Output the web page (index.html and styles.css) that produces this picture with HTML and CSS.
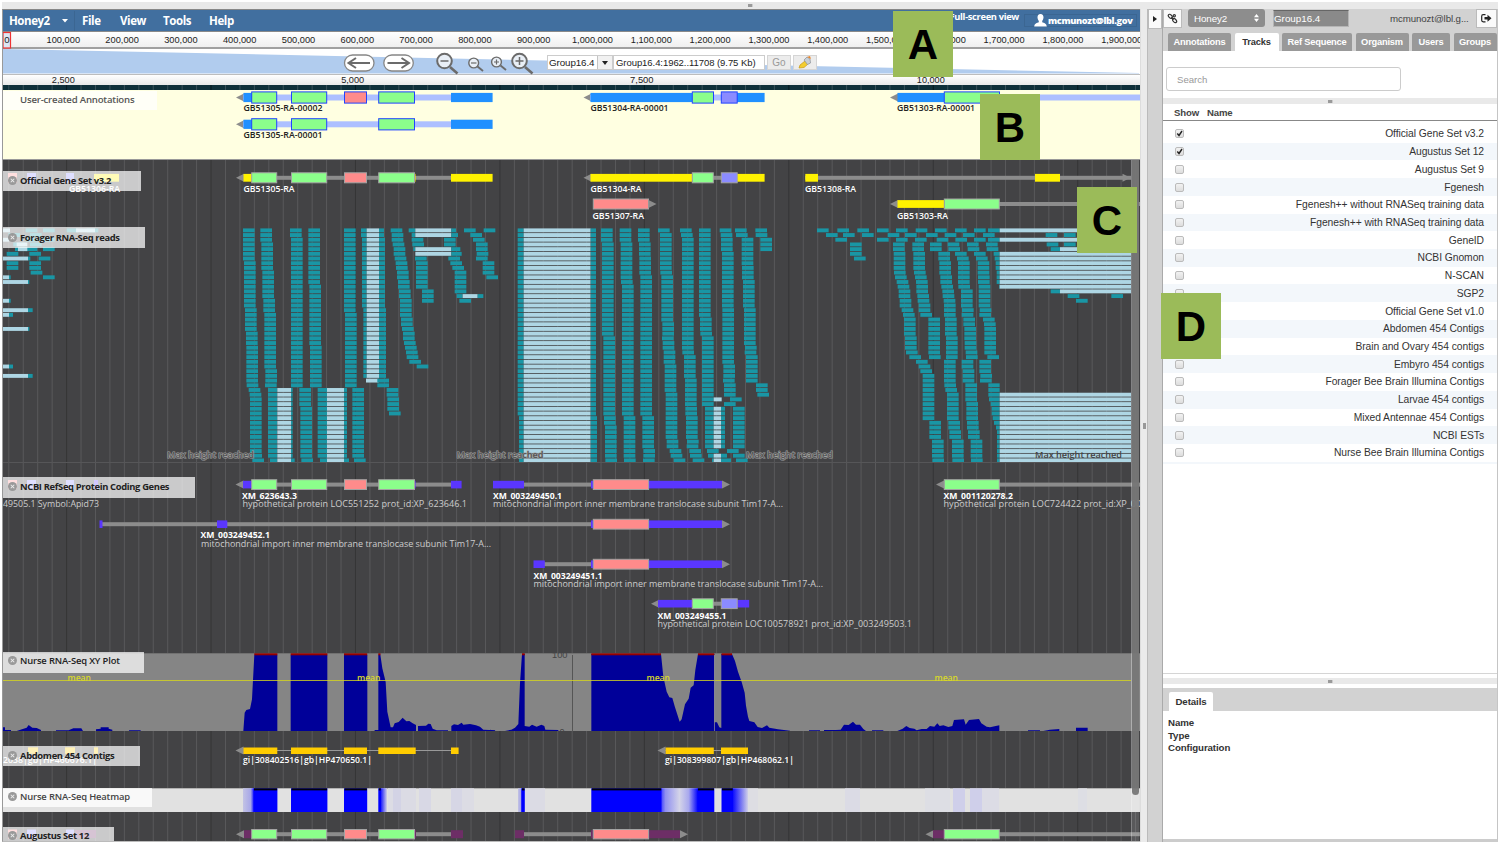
FILE: index.html
```html
<!DOCTYPE html>
<html lang="en">
<head>
<meta charset="utf-8">
<title>Genome annotation browser</title>
<link rel="stylesheet" href="styles.css">
</head>
<body>
<div class="app">
  <div class="top-splitter"><i class="grip"></i></div>
  <div class="columns">
    <main class="browser">
      <header class="menubar">
        <span class="menu-brand">Honey2</span>
        <span class="menu-drop"><svg width="6" height="4"><path d="M0 0h6L3 3.5z" fill="#fff"/></svg></span>
        <span class="menu-item file">File</span>
        <span class="menu-item view">View</span>
        <span class="menu-item tools">Tools</span>
        <span class="menu-item help">Help</span>
        <span class="fullscreen">Full-screen view</span>
        <span class="user"><svg width="13" height="13" viewBox="0 0 13 13"><path d="M6.5 0C4.4 0 3.4 1.6 3.5 3.5 3.6 5 4.200 6.100 4.800 6.900V8.300C3 9 0.500 9.400 0.200 12.500H12.800C12.500 9.400 10 9 8.200 8.300V6.900C8.800 6.100 9.400 5 9.500 3.500 9.600 1.600 8.600 0 6.500 0z" fill="#fff"/></svg><b>mcmunozt@lbl.gov</b></span>
      </header>
      <div class="overview"><svg id="overview" width="1137" height="15" viewBox="3 32 1137 15"></svg></div>
      <nav class="navbar">
        <svg class="nav-bg" width="1137" height="26" viewBox="3 49 1137 26"><path d="M3 49L1139 73V73.500H3z" fill="#b1ccee"/></svg>
        <svg class="nav-icons" width="200" height="26" viewBox="340 49 200 26" fill="none" stroke="#6b6b6b">
          <rect x="344.500" y="55" width="29.500" height="16" rx="8" fill="#fff" stroke="#868686" stroke-width="1.300"/>
          <path d="M370 63H349M356 58L348.500 63L356 68" stroke-width="2"/>
          <rect x="383.800" y="55" width="29.500" height="16" rx="8" fill="#fff" stroke="#868686" stroke-width="1.300"/>
          <path d="M387.500 63H408.500M401.500 58L409 63L401.500 68" stroke-width="2"/>
          <path d="M450 67L457.500 73.500" stroke-width="2.600"/><circle cx="444.500" cy="61" r="7.300" fill="#e9eff6" stroke-width="2"/><path d="M440.500 61H448.500" stroke-width="1.500"/>
          <path d="M477.500 66.500L483 71" stroke-width="1.900"/><circle cx="473.700" cy="63" r="4.900" fill="#e9eff6" stroke-width="1.400"/><path d="M471 63H476.500" stroke-width="1.200"/>
          <path d="M500.500 65.500L506 70" stroke-width="1.900"/><circle cx="496.500" cy="62" r="4.900" fill="#e9eff6" stroke-width="1.400"/><path d="M494 62H499M496.500 59.500V64.500" stroke-width="1.200"/>
          <path d="M525 67L532.500 73.500" stroke-width="2.600"/><circle cx="519.500" cy="61" r="7.300" fill="#e9eff6" stroke-width="2"/><path d="M515.500 61H523.500M519.500 57V65" stroke-width="1.500"/>
        </svg>
        <span class="combo"><span class="combo-text">Group16.4</span><span class="combo-arrow"><svg width="6" height="4"><path d="M0 0h6L3 4z" fill="#222"/></svg></span></span>
        <span class="location">Group16.4:1962..11708 (9.75 Kb)</span>
        <span class="go">Go</span>
        <span class="highlight"><svg width="14" height="13" viewBox="0 0 14 13"><path d="M1 12l1-3 5-4 3 3-4 3.500z" fill="#f3cd2f" stroke="#c79a18" stroke-width=".7"/><path d="M6 4l3-3 3 2 .5 4-3 1.500z" fill="#c9cfd5" stroke="#8a8f96" stroke-width=".7"/><path d="M9 1l3-1 1 3z" fill="#e8862c"/></svg></span>
      </nav>
      <div class="ruler"><svg id="ruler" width="1137" height="10" viewBox="3 75 1137 10"></svg></div>
      <div class="ruler-grid"><svg id="strip" width="1137" height="5" viewBox="3 85 1137 5"></svg></div>
      <section class="track user-track">
        <svg id="t-user" width="1137" height="69" viewBox="3 90 1137 69"></svg>
        <span class="label plain"><span>User-created Annotations</span></span>
      </section>
      <div class="tracks">
        <section class="track"><svg id="t-official" width="1137" height="67" viewBox="3 160 1137 67"></svg>
          <span class="label l-official"><i class="close"></i><span>Official Gene Set v3.2</span></span></section>
        <section class="track"><svg id="t-reads" width="1137" height="236" viewBox="3 227 1137 236"></svg>
          <span class="label l-reads"><i class="close"></i><span>Forager RNA-Seq reads</span></span></section>
        <section class="track"><svg id="t-ncbi" width="1137" height="190" viewBox="3 463 1137 190"></svg>
          <span class="label l-ncbi"><i class="close"></i><span>NCBI RefSeq Protein Coding Genes</span></span></section>
        <section class="track"><svg id="t-xy" width="1137" height="78" viewBox="3 653 1137 78"></svg>
          <span class="label l-xy"><i class="close"></i><span>Nurse RNA-Seq XY Plot</span></span></section>
        <section class="track"><svg id="t-abdomen" width="1137" height="57" viewBox="3 731 1137 57"></svg>
          <span class="label l-abdomen"><i class="close"></i><span>Abdomen 454 Contigs</span></span></section>
        <section class="track"><svg id="t-heat" width="1137" height="24" viewBox="3 788 1137 24"></svg>
          <span class="label l-heat"><i class="close"></i><span>Nurse RNA-Seq Heatmap</span></span></section>
        <section class="track"><svg id="t-augustus" width="1137" height="29" viewBox="3 812 1137 29"></svg>
          <span class="label l-augustus"><i class="close"></i><span>Augustus Set 12</span></span></section>
        <div class="scrollbar"><i class="thumb"></i></div>
      </div>
    </main>
    <div class="side-splitter"><i class="grip-v"></i></div>
    <div class="collapse-bar"><span class="icon-btn collapse"><svg width="4" height="6"><path d="M0 0v6l4-3z" fill="#222"/></svg></span></div>
    <aside class="panel">
      <div class="panel-head">
        <div class="panel-tools">
          <span class="icon-btn link"><svg width="11" height="11" viewBox="0 0 11 11" fill="none" stroke="#333" stroke-width="1.200"><ellipse cx="3.300" cy="3.300" rx="2.400" ry="1.500" transform="rotate(45 3.300 3.300)"/><ellipse cx="7.600" cy="7.600" rx="2.400" ry="1.500" transform="rotate(45 7.600 7.600)"/><path d="M4.300 4.300L6.600 6.600"/><circle cx="7.300" cy="2.800" r="1.100"/></svg></span>
          <span class="organism-select"><span>Honey2</span><svg width="5" height="8"><path d="M0 3.200L2.500 0L5 3.200zM0 4.800L2.500 8L5 4.800z" fill="#fff"/></svg></span>
          <span class="seq-input">Group16.4</span>
          <span class="email">mcmunozt@lbl.g...</span>
          <span class="icon-btn logout"><svg width="11" height="9" viewBox="0 0 11 9"><path d="M4.500 .7H2.200Q.7 .7 .7 2.200V6.300Q.7 7.800 2.200 7.800H4.500" fill="none" stroke="#222" stroke-width="1.200"/><path d="M3.500 3H6.500V.8L10.500 4.300L6.500 7.800V5.600H3.500z" fill="#222"/></svg></span>
        </div>
        <div class="tabs">
          <span class="tab w-annotations">Annotations</span><span class="tab active w-tracks">Tracks</span><span class="tab w-sequence">Ref Sequence</span><span class="tab w-organism">Organism</span><span class="tab w-users">Users</span><span class="tab w-groups">Groups</span>
        </div>
      </div>
      <div class="search-pane"><span class="search">Search</span></div>
      <div class="h-splitter"><i class="grip"></i></div>
      <div class="table">
        <div class="thead"><b class="c-show">Show</b><b>Name</b></div>
        <div class="tbody" id="rows"></div>
      </div>
      <div class="h-splitter low"><i class="grip"></i></div>
      <div class="details">
        <div class="details-head"><span class="tab active">Details</span></div>
        <div class="details-body"><b>Name</b><b>Type</b><b>Configuration</b></div>
      </div>
    </aside>
  </div>
  <span class="callout a">A</span>
  <span class="callout b">B</span>
  <span class="callout c">C</span>
  <span class="callout d">D</span>
</div>
<script src="script.js"></script>
</body>
</html>
```
FILE: styles.css
```css
* { box-sizing: border-box; }
body { margin: 0; background: #fff; font-family: "Liberation Sans", Arial, sans-serif; color: #333; }
svg { display: block; }
.app { position: relative; width: 1500px; height: 844px; padding: 2px 2px 0 2px; overflow: hidden; }
.top-splitter { height: 7px; background: #e9e9e9; display: flex; align-items: center; justify-content: center; }
.grip { width: 5px; height: 3px; background: #9a9a9a; border-right: 1px solid #ccc; }
.columns { display: flex; height: 833px; }

.browser { width: 1138px; border-left: 1px solid #999; border-top: 1px solid #888; overflow: hidden; background: #fff; border-bottom: 1px solid #bbb; }
.menubar { height: 22px; background: #416f9f; border-bottom: 1px solid #8a8a8a; display: flex; align-items: center; color: #fff; font: 700 11.500px "Open Sans", "Noto Sans", sans-serif; white-space: nowrap; }
.menu-brand { width: 53px; padding-left: 6px; font-size: 11.500px; letter-spacing: -.45px; padding-bottom: 1px; }
.menu-drop { width: 19px; height: 20px; display: flex; align-items: center; justify-content: center; border-right: 1px solid #3b6692; }
.menu-item { letter-spacing: -.4px; }
.file { margin-left: 7px; width: 38px; }
.view { width: 43px; }
.tools { width: 46px; }
.fullscreen { margin-left: auto; font-size: 9.300px; letter-spacing: -.32px; padding-bottom: 8px; }
.user { display: flex; align-items: center; gap: 1px; margin-left: 5px; margin-right: 3px; padding: 0 8px 0 9px; width: 113px; height: 13px; border: 1px solid #3b6692; font-size: 9.200px; letter-spacing: -.36px; }
.user svg { flex: none; }

.overview { height: 17px; border-bottom: 2px solid #a0a0a0; background: linear-gradient(#fff, #efefef); }
.navbar { position: relative; height: 26px; border-bottom: 1px solid #bdbdbd; display: flex; align-items: center; padding-left: 337px; padding-top: 2px; font-size: 10px; white-space: nowrap; color: #222; }
.nav-bg { position: absolute; left: 0; top: 0; }
.nav-icons { position: relative; flex: none; margin-top: -2px; }
.combo { position: relative; margin-left: 7px; width: 66px; height: 15px; border: 1px solid #ccc; background: #fff; display: flex; align-items: center; }
.combo-text { width: 49px; padding-left: 1px; font-size: 9.800px; letter-spacing: -.1px; }
.combo-arrow { flex: 1; height: 13px; background: #f1f1f1; border-left: 1px solid #c4c4c4; display: flex; align-items: center; justify-content: center; }
.location { position: relative; width: 152px; height: 15px; line-height: 13px; padding-left: 2px; background: #fff; border: 1px solid #ccc; font-size: 9.500px; letter-spacing: -.06px; }
.go, .highlight { position: relative; height: 15px; background: #ececec; border: 1px solid #d5d5d5; display: flex; align-items: center; justify-content: center; color: #999; }
.go { width: 24px; margin-left: 2px; }
.highlight { width: 24px; margin-left: 2px; }
.ruler { height: 10px; background: linear-gradient(#fff, #e9e9e9); }
.ruler-grid { height: 5px; background: #0f303a; }

.track { position: relative; }
.user-track { background: #ffffe1; border-bottom: 1px solid #999; }
.tracks { position: relative; background: #434345; }
.label { position: absolute; left: 0; top: 0; height: 20px; display: flex; align-items: center; padding-left: 5px; padding-bottom: 1px; background: rgba(255,255,255,.72); font: 700 9.400px "Open Sans", "Noto Sans", sans-serif; color: #222; white-space: nowrap; }
.label span { letter-spacing: -.34px; }
.label.plain { padding-left: 17px; padding-bottom: 3px; width: 154px; height: 19px; top: 1px; color: #555; font-weight: 600; font-size: 9.600px; }
.label.plain span { letter-spacing: -.2px; }
.close { width: 9px; height: 9px; margin-right: 3px; border-radius: 50%; background: #999; position: relative; flex: none; }
.close::before, .close::after { content: ""; position: absolute; left: 2px; top: 4px; width: 5px; height: 1px; background: #eee; transform: rotate(45deg); }
.close::after { transform: rotate(-45deg); }
.l-official { width: 138px; top: 11px; }
.l-reads { width: 142px; top: 0; height: 21px; }
.l-ncbi { width: 192px; top: 14px; height: 21px; padding-bottom: 3px; }
.l-xy { width: 141px; top: -1px; height: 21px; padding-bottom: 4px; font-weight: 600; }
.l-xy span, .l-heat span { letter-spacing: -.14px; }
.l-abdomen { width: 137px; top: 15px; height: 20px; padding-bottom: 2px; }
.l-heat { width: 149px; top: 0; height: 19px; color: #444; font-weight: 600; padding-bottom: 2px; background: rgba(255,255,255,.78); }
.l-augustus { width: 111px; top: 15px; height: 14px; padding-top: 4px; }
.scrollbar { position: absolute; right: 1px; top: 0; width: 8px; height: 100%; background: rgba(255,255,255,.12); border-left: 1px solid rgba(255,255,255,.25); }
.thumb { display: block; height: 635px; border-radius: 0 0 4px 4px; background: rgba(118,118,118,.94); }

.side-splitter { width: 7px; background: #ebebeb; display: flex; align-items: center; justify-content: center; border-left: 1px solid #ddd; }
.grip-v { width: 3px; height: 6px; background: #999; }
.collapse-bar { width: 16px; background: #d2d2d2; border-left: 1px solid #bbb; border-right: 1px solid #aaa; }
.icon-btn { display: flex; align-items: center; justify-content: center; height: 19px; background: #fafafa; border: 1px solid #bbb; flex: none; }
.collapse { width: 14px; height: 20px; }

.panel { width: 335px; display: flex; flex-direction: column; border-right: 1px solid #c5c5c5; border-bottom: 3px solid #ccc; }
.panel-head { height: 42px; background: #d2d2d2; }
.panel-tools { display: flex; height: 24px; align-items: flex-start; font-size: 9.800px; }
.link { width: 19px; }
.organism-select { margin-left: 6px; width: 77px; height: 18px; border-radius: 3px; background: #8d8d8d; color: #fff; display: flex; align-items: center; justify-content: space-between; padding: 0 6px; letter-spacing: -.1px; }
.seq-input { margin: 1px 0 0 8px; width: 76px; height: 17px; line-height: 15px; background: #8a8a8a; border: 1px solid #b5b5b5; border-top-color: #666; color: #fff; }
.email { margin-left: 41px; width: 86px; line-height: 19px; font-size: 9.700px; letter-spacing: -.1px; white-space: nowrap; color: #444; }
.logout { width: 21px; }
.tabs { display: flex; gap: 3.500px; padding-left: 5px; }
.tab { height: 18px; line-height: 18px; text-align: center; background: #999; color: #fff; font-weight: 700; font-size: 9.300px; letter-spacing: -.2px; border-radius: 2px 2px 0 0; white-space: nowrap; flex: none; }
.tab.active { background: #fff; color: #333; }
.w-annotations { width: 63px; }
.w-tracks { width: 44px; }
.w-sequence { width: 70px; }
.w-organism { width: 53px; }
.w-users { width: 38px; }
.w-groups { width: 43px; }
.search-pane { height: 47px; padding: 16px 0 0 3px; }
.search { display: block; width: 235px; height: 24px; line-height: 24px; border: 1px solid #ccc; border-radius: 3px; padding-left: 10px; font-size: 9.600px; color: #999; }
.h-splitter { height: 6px; background: #e9e9e9; display: flex; align-items: center; justify-content: center; flex: none; }
.table { height: 570px; border-bottom: 1px solid #d5d5d5; }
.thead { height: 17px; line-height: 18px; border-bottom: 1px solid #888; display: flex; font-size: 9.600px; letter-spacing: -.15px; padding-left: 11px; color: #444; }
.c-show { width: 33px; }
.tbody { padding-top: 4px; }
.row { height: 17.720px; display: flex; align-items: center; justify-content: space-between; padding: 0 13px 0 12px; font-size: 10.300px; letter-spacing: -.05px; color: #333; }
.row:nth-child(even) { background: #f3f7fb; }
.tbody::after { content: ""; display: block; height: 2px; background: #f3f7fb; }
.box { width: 9px; height: 9px; border: 1px solid #bbb; border-radius: 2px; background: linear-gradient(#f2f2f2, #ddd); }
.low { margin-top: 4px; }
.details { flex: 1; margin-top: 4px; display: flex; flex-direction: column; }
.details-head { height: 23px; background: #d2d2d2; padding: 4px 0 0 6px; }
.details-head .tab { display: block; width: 44px; height: 19px; line-height: 20px; font-size: 9.700px; letter-spacing: -.1px; }
.details-body { display: flex; flex-direction: column; padding: 6px 0 0 5px; font-size: 9.700px; letter-spacing: -.1px; line-height: 12.500px; }

.callout { position: absolute; width: 60px; height: 65.500px; background: #9bbb59; color: #000; font: 700 42px/67px "Liberation Sans", Arial, sans-serif; text-align: center; }
.a { left: 893px; top: 11px; }
.b { left: 980px; top: 94px; }
.c { left: 1077px; top: 187px; }
.d { left: 1161px; top: 293px; }
```
FILE: script.js
```js
const $ = id => document.getElementById(id);
const rect = (x1, x2, y1, y2, fill, extra = '') =>
  `<rect x="${x1}" y="${y1}" width="${(x2 - x1).toFixed(2)}" height="${(y2 - y1).toFixed(2)}" fill="${fill}" ${extra}/>`;
const SANS = 'Liberation Sans, Arial, sans-serif';
const HUM = 'Open Sans, Noto Sans, sans-serif';
const text = (x, y, s, w, fill, opt = {}) =>
  `<text x="${x}" y="${y}" ${w ? `textLength="${w}" lengthAdjust="spacingAndGlyphs"` : ''} fill="${fill}" font-size="${opt.size || 9}" font-weight="${opt.weight || 400}" text-anchor="${opt.anchor || 'start'}" font-family="${opt.font || HUM}" ${opt.extra || ''}>${s}</text>`;

const GREEN = '#8bff8b', PINK = '#ff8b8b', PURPLE = '#8b8bff';

function grid(y1, y2, light = '#59595b', dark = '#353536') {
  let s = '';
  for (let i = 0; i < 80; i++) {
    const x = 8.8 + i * 14.445;
    s += rect((x - .5).toFixed(2), +(x + .5).toFixed(2), y1, y2, i % 10 === 4 ? dark : light);
  }
  return s;
}

/* Rulers */
let s = '';
for (let i = 1; i <= 19; i++) {
  const n = (i * 100000).toLocaleString('en-US');
  s += text(4.5 + 58.8 * i, 43.4, n, i > 9 ? 41 : 33.5, '#222', { size: 9.6, anchor: 'middle', font: SANS });
}
s += rect(3, 10.5, 32.5, 48, '#dce7f5', 'stroke="#e33" stroke-width="1.2"') + text(4.3, 43.4, '0', 0, '#222', { size: 9.6, font: SANS });
$('overview').innerHTML = s;
$('overview').style.overflow = 'visible';
$('ruler').innerHTML = [['2,500', 63.3, 23], ['5,000', 352.7, 23], ['7,500', 641.8, 23.5], ['10,000', 930.8, 28]]
  .map(r => text(r[1], 83.1, r[0], r[2], '#222', { size: 9.6, anchor: 'middle', font: SANS })).join('');
$('strip').innerHTML = grid(85, 90, '#3a525a', '#06191f');

/* Gene glyphs: each part is [kind, x1, x2] */
function gene(y, parts, c) {
  let out = '';
  for (const [k, a, b] of parts) {
    if (k === 'line') out += rect(a, b, y - c.line, y + c.line, c.lineFill || '#8c8c8c');
    if (k === 'utr') out += rect(a, b, y - c.utr, y + c.utr, c.utrFill);
    if (k === 'left') out += `<path d="M${a} ${y}L${a + 8} ${y - 4}V${y + 4}z" fill="#8c8c8c"/>`;
    if (k === 'right') out += `<path d="M${a + 8} ${y}L${a} ${y - 4}V${y + 4}z" fill="#8c8c8c"/>`;
    const cds = { g: GREEN, p: PINK, v: PURPLE }[k];
    if (cds) out += rect(a, b, y - c.cds, y + c.cds, cds, `stroke="${c.stroke}" stroke-width="1"`);
  }
  return out;
}
const exons = [['g', 251.7, 276.7], ['g', 291.5, 326.7], ['p', 344.5, 366.5], ['g', 378.7, 414.5]];

const U = { line: 3, lineFill: '#adbfff', utr: 4.6, utrFill: '#2090ff', cds: 5.6, stroke: '#2244ff' };
const ut = (x, y, t, w) => text(x, y, t, w, '#222', { weight: 600 });
$('t-user').innerHTML =
  gene(97.5, [['left', 236], ['line', 243, 492], ['utr', 243.5, 252], ['utr', 451, 492.6], ...exons], U) +
  gene(124.3, [['left', 236], ['line', 243, 492], ['utr', 243.5, 252], ['utr', 451, 492.6], exons[0], exons[1], exons[3]], U) +
  gene(97.5, [['left', 583.5], ['line', 590, 764], ['utr', 590.5, 692], ['utr', 737, 764.6], ['g', 692.3, 713.5], ['v', 721.3, 737.2]], U) +
  gene(97.5, [['left', 890], ['line', 944, 1140], ['utr', 897.5, 944], ['g', 944.3, 999.5]], U) +
  ut(243.5, 111.3, 'GB51305-RA-00002', 79) + ut(243.5, 138.3, 'GB51305-RA-00001', 79) +
  ut(590.5, 111.3, 'GB51304-RA-00001', 78) + ut(897, 111.3, 'GB51303-RA-00001', 78);

const O = { line: 2, utr: 3.9, utrFill: '#fff200', cds: 5, stroke: '#a3a3a3' };
const wt = (x, y, t, w) => text(x, y, t, w, '#fff', { weight: 600 });
$('t-official').innerHTML = grid(160, 227) +
  gene(177.8, [['utr', 94, 119]], O) + rect(8, 17, 173, 183, PINK) + rect(27, 36, 173, 183, PURPLE) + rect(66, 74, 173, 183, PURPLE) +
  gene(177.8, [['left', 236], ['line', 243, 452], ['utr', 243.5, 252], ['utr', 413, 415.5], ['utr', 451, 492.6], ...exons], O) +
  gene(177.8, [['left', 583.5], ['line', 590, 764], ['utr', 590.5, 692], ['utr', 737, 764.6], ['g', 692.3, 713.3], ['v', 721.3, 737.2]], O) +
  gene(204, [['p', 593.3, 648.5], ['right', 648.5]], O) +
  gene(177.8, [['line', 805, 1131], ['utr', 805.3, 818], ['utr', 1035, 1060], ['right', 1122.5]], O) +
  gene(204, [['left', 890], ['line', 999, 1140], ['utr', 897.5, 944], ['g', 944.3, 999.3]], O) +
  wt(243.5, 191.7, 'GB51305-RA', 51) + wt(590.5, 191.7, 'GB51304-RA', 51) + wt(592.5, 218.7, 'GB51307-RA', 51.5) +
  wt(805, 191.7, 'GB51308-RA', 51) + wt(897, 218.7, 'GB51303-RA', 51) + wt(69, 191.7, 'GB51306-RA', 51);

/* Read pileup: columns are [row, x] breakpoints measured in thirds of a pixel from an origin */
const TEAL = '#1996a5', PALE = '#aed6e4', RW = 35;
let reads = '';
const rowY = r => 228.4 + r * 4.695;
function bar(o, r, a, b, fill = TEAL) { reads += rect((o + a / 3).toFixed(2), o + b / 3, rowY(r).toFixed(2), rowY(r) + 3.9, fill); }
function col(o, pts, clamp = 1e9) {
  for (let i = 0; i < pts.length; i++) {
    const [r0, x0] = pts[i], [r1, x1] = pts[i + 1] || [r0 + 1, x0];
    for (let r = r0; r < r1; r++) {
      const near = Math.abs(x1 - x0) < 12;
      const x = near ? x0 + Math.round((x1 - x0) * (r - r0) / (r1 - r0) / 3) * 3 : x0;
      bar(o, r, x, Math.min(x + RW, clamp));
    }
  }
}
function gap(o, r0, r1, a, b, c, d) {
  for (let r = r0; r <= r1; r++) { bar(o, r, a, b); bar(o, r, b, c, PALE); bar(o, r, c, d); }
}
const at = (o, list) => list.forEach(([r, ...xs]) => xs.forEach(x => bar(o, r, x, x + RW)));

col(0, [[0, 729], [14, 732], [20, 735], [25, 739], [33, 740], [34, 746], [36, 750], [48, 751], [49, 757]]);
col(0, [[0, 781], [12, 787], [17, 790], [18, 793], [33, 795]]);
col(0, [[0, 870], [3, 873], [33, 873], [34, 898], [37, 898], [38, 901], [48, 901], [49, 904]]);
col(0, [[0, 925], [24, 928], [25, 930], [33, 930]]);
col(0, [[0, 1032], [17, 1032], [18, 1035], [33, 1035], [34, 1057], [48, 1057], [49, 1062]]);
gap(0, 34, 48, 804, 832, 873, 878); gap(0, 49, 49, 810, 832, 873, 884);
gap(0, 34, 48, 953, 981, 1032, 1041); gap(0, 49, 49, 960, 981, 1032, 1047);
gap(0, 0, 1, 1083, 1100, 1137, 1152); gap(0, 2, 16, 1086, 1100, 1137, 1155); gap(0, 17, 31, 1090, 1100, 1137, 1158);
bar(0, 32, 1098, 1136, PALE);
at(0, [[32, 1132], [33, 1132], [34, 1160], [35, 1160], [36, 1162], [37, 1162], [38, 1162], [39, 1167]]);
col(0, [[0, 1172], [3, 1178], [8, 1188], [13, 1197], [20, 1203], [24, 1212], [27, 1220], [28, 1228], [29, 1250]]);
gap(0, 0, 0, 1226, 1246, 1354, 1368); gap(0, 1, 1, 1235, 1246, 1354, 1374);
gap(0, 4, 4, 1240, 1246, 1354, 1381); gap(0, 5, 5, 1246, 1246, 1354, 1385); gap(0, 14, 14, 1370, 1388, 1433, 1450);
at(0, [[2, 1235, 1332], [3, 1237, 1332], [6, 1245, 1345], [7, 1248, 1351], [8, 1248, 1357], [9, 1248, 1364], [10, 1248, 1364],
  [11, 1248, 1364], [12, 1248, 1364], [13, 1266, 1364], [14, 1266], [15, 1266, 1378], [0, 1392, 1451], [1, 1411], [2, 1419],
  [3, 1428], [4, 1428], [5, 1430], [6, 1428], [7, 1448], [8, 1448], [9, 1448], [10, 1459]]);
at(0, [[0, 77, 129, 200, 260], [1, 25, 90], [2, 77, 129], [3, 40, 90], [4, 45, 77, 129], [5, 20, 88], [6, 116], [7, 20, 88], [8, 20, 88], [9, 92], [10, 129]]);
bar(0, 0, 228, 285, PALE); bar(0, 0, 9, 30, PALE); bar(0, 2, 9, 27, PALE); bar(0, 3, 50, 82, PALE); bar(0, 4, 54, 82, PALE);
for (const [r, b, d] of [[6, 84, 91], [10, 27, 32], [11, 84, 88], [15, 27, 32], [17, 84, 98], [18, 27, 39], [21, 84, 88], [29, 27, 39], [31, 84, 98]]) gap(0, r, r, 9, 9, b, d);

gap(500, 0, 39, 53, 71, 272, 288); gap(500, 40, 49, 57, 71, 272, 291);
col(500, [[0, 303], [5, 306], [22, 306], [23, 310], [39, 310], [40, 312], [43, 315], [49, 316]]);
col(500, [[0, 359], [5, 362], [11, 363], [12, 366], [39, 366], [40, 371], [49, 372]]);
col(500, [[0, 414], [6, 418], [13, 421], [39, 421], [40, 427], [49, 429]]);
col(500, [[0, 474], [1, 480], [9, 481], [10, 484], [23, 486], [24, 488], [30, 494], [39, 497], [44, 497], [46, 500], [47, 509], [48, 512], [49, 521]]);
col(500, [[0, 540], [2, 546], [26, 547], [27, 552], [38, 556], [40, 558], [46, 560], [47, 568], [48, 570], [49, 578]]);
col(500, [[0, 597], [18, 597], [19, 600], [22, 601], [23, 606], [36, 606], [37, 606]]);
gap(500, 36, 36, 641, 641, 665, 665); gap(500, 38, 46, 615, 641, 663, 675); gap(500, 48, 48, 624, 641, 663, 681); gap(500, 49, 49, 636, 641, 663, 693);
col(500, [[0, 659], [2, 663], [7, 666], [17, 667], [32, 669], [33, 672], [35, 672], [36, 690], [37, 672], [38, 699], [46, 699], [47, 681], [48, 699], [49, 708]]);
bar(500, 47, 621, 656);
col(500, [[0, 705], [1, 708], [2, 725], [8, 726], [14, 729], [20, 732], [26, 734], [27, 738], [32, 738], [33, 768], [34, 768], [35, 772]]);
col(500, [[0, 766], [1, 767], [2, 781], [3, 781], [4, 781]]);

at(800, [[0, 51, 112, 172, 231, 288, 347, 405, 465, 522, 564], [1, 78, 129, 186, 263, 315, 378, 434, 489, 549, 737, 792],
  [2, 106, 231, 288, 345, 410, 466, 522, 564], [3, 150, 390, 443, 501, 558, 740, 792], [4, 150, 390, 445, 503, 560], [5, 150], [6, 162], [14, 803, 934], [15, 828]]);
col(800, [[3, 279], [5, 281], [9, 282], [10, 285], [11, 290], [13, 296], [16, 299], [18, 309], [20, 312], [25, 315], [26, 318], [27, 328], [28, 348], [29, 356], [30, 361], [31, 368], [40, 368], [41, 388], [44, 388], [45, 396], [49, 397]]);
col(800, [[3, 337], [9, 342], [12, 349], [15, 353], [17, 356], [18, 361], [19, 385], [26, 385], [27, 387]]);
col(800, [[5, 415], [9, 418], [12, 424], [14, 428], [16, 432], [18, 432], [19, 435], [27, 438], [28, 432], [32, 432], [33, 433], [35, 441], [40, 441], [41, 445], [44, 448], [45, 456], [49, 457]]);
col(800, [[5, 465], [7, 474], [12, 475], [13, 483], [18, 485], [19, 490], [24, 494], [27, 498], [28, 485], [32, 488], [33, 496], [40, 499], [41, 501], [44, 504], [45, 512], [49, 513]]);
col(800, [[5, 522], [7, 533], [10, 534], [12, 536], [18, 538], [19, 549], [21, 553], [26, 553], [27, 562], [28, 538], [32, 540], [33, 565], [36, 567], [37, 572], [39, 575], [41, 582], [43, 591], [49, 591]], 599);
col(800, [[5, 581], [7, 587], [11, 590], [12, 597]], 599);
for (const r of [0, 2]) bar(800, r, 599, 993, PALE);
for (const r of [4, 13]) gap(800, r, r, 752, 780, 993, 993);
for (let r = 5; r <= 12; r++) bar(800, r, 599, 993, PALE);
for (let r = 35; r <= 49; r++) bar(800, r, 599, 993, PALE);
const note = x => text(x, 458.2, 'Max height reached', 87, '#555', { size: 9, weight: 600, extra: 'stroke="#a0a0a0" stroke-width="1.1" paint-order="stroke"' });
$('t-reads').innerHTML = grid(227, 463) + reads + rect(3, 1131, 462, 463, '#565658') +
  note(167) + note(456.5) + note(746) + text(1035, 458.2, 'Max height reached', 87, '#444', { weight: 600 });

/* RefSeq genes */
const N = { line: 2, utr: 3.8, utrFill: '#5a36ff', cds: 4.9, stroke: '#a3a3a3' };
const tail = [['utr', 591, 722], ['p', 593.3, 648.6], ['right', 722]];
const name = (x, y, t, w) => text(x, y, t, w, '#fff', { weight: 700 });
const desc = (x, y, t, w) => text(x, y, t, w, '#cdcdcd', { weight: 500 });
const TIM = 'mitochondrial import inner membrane translocase subunit Tim17-A...';
$('t-ncbi').innerHTML = grid(463, 653) + rect(66, 74, 480, 489, PURPLE) + rect(27, 36, 480, 489, PURPLE) + rect(94, 98, 480, 489, '#5a36ff') + rect(8, 17, 480, 489, PINK) +
  gene(484.6, [['left', 235.5], ['line', 243, 452], ['utr', 243, 252], ['utr', 413, 415.5], ['utr', 451, 461.6], ...exons], N) +
  gene(484.6, [['line', 493, 591], ['utr', 493, 524], ...tail], N) +
  gene(524.2, [['line', 100, 591], ['utr', 99.5, 102.5], ['utr', 217, 227.3], ...tail], N) +
  gene(564.2, [['line', 534, 591], ['utr', 533.5, 544.8], ...tail], N) +
  gene(603.7, [['left', 651], ['line', 658, 749], ['utr', 658, 692], ['utr', 737, 749.2], ['g', 692.3, 713.3], ['v', 721.3, 737.2]], N) +
  gene(484.6, [['left', 936], ['line', 999, 1140], ['g', 944.3, 999.3]], N) +
  name(242, 498.5, 'XM_623643.3', 55) + desc(242.5, 507.2, 'hypothetical protein LOC551252 prot_id:XP_623646.1', 224.5) +
  name(493, 498.5, 'XM_003249450.1', 69) + desc(493, 507.2, TIM, 290) +
  name(200.5, 538.2, 'XM_003249452.1', 69.5) + desc(201, 547.1, TIM, 290) +
  name(533.5, 578.8, 'XM_003249451.1', 69) + desc(533.5, 587.3, TIM, 289.5) +
  name(657.5, 618.5, 'XM_003249455.1', 69) + desc(657.5, 627.1, 'hypothetical protein LOC100578921 prot_id:XP_003249503.1', 254.5) +
  name(943.5, 498.5, 'XM_001120278.2', 69.5) + desc(943.5, 507.2, 'hypothetical protein LOC724422 prot_id:XP_001120278.1', 242) +
  desc(3, 507.2, '49505.1 Symbol:Apid73', 96);

/* Coverage plot */
const NAVY = '#000099';
let xy = rect(3, 1140, 653.3, 731, '#858585');
xy += `<g fill="${NAVY}"><path transform="translate(0 640) scale(.33333)" d="M9 273V262H15V270H33V273zM50 273L66 268L80 263L86 255L97 263L110 264L123 270V273zM168 273V271H206L220 265H244L249 273zM288 273V268L302 266V262H326V266L337 269V273zM387 273V271H422V273z
M730 273L734 218L739 210L750 207L756 178L763 44H832V273zM872 273V44H982V273zM1032 273V44H1102V273zM1122 273L1126 270H1135V44H1141L1147 85L1157 126L1162 215L1172 262L1179 262L1184 250L1196 246L1208 233L1219 244L1228 243L1238 250L1248 255V273zM1254 273V258L1278 257L1285 251L1292 252L1298 266L1310 271H1344V273zM1354 273V258L1362 253L1374 255L1385 248L1390 254L1410 252L1428 256L1440 260L1450 269L1485 271V273z"/>
<path transform="translate(490 470) scale(.33333)" d="M0 783V779L18 783zM45 783L64 779L75 773L85 762L90 640L96 552H104V768L118 770L126 764L140 770L154 764L163 768L166 779L205 780V783zM304 783V552H513L520 620L530 665L538 682L547 684L555 712L569 755L575 748L585 703L596 686L602 653L611 646L616 600L624 552H673V757L681 757L688 772L694 774V552H726L735 573L744 605L755 636L764 668L768 707L774 740L778 753L793 757L803 771L816 774L831 766L838 773L864 778L900 782V783zM957 783V781H990V783zM1002 783V780H1038L1052 779L1062 764L1076 765L1089 755L1098 764L1110 764L1120 777L1128 783zM1146 783V781H1180V783zM1222 783L1238 776L1249 768L1259 774L1273 776L1280 781L1295 777L1310 777L1320 768L1333 770L1342 760L1349 768L1360 766L1375 771L1387 768L1392 750L1422 748L1427 764L1437 750L1467 747L1474 760L1490 770L1500 772L1528 766V783z"/>
<path transform="translate(900 460) scale(.33333)" d="M384 813V811H420V813zM430 813L450 809L478 807V813zM528 813V803H563V813z"/></g>`;
for (const [a, b] of [[254.3, 277.4], [290.7, 327.4], [344, 367.2], [378.3, 380.5], [522, 524.8], [591.3, 661], [698, 714.3], [721.5, 732]]) xy += rect(a, b, 653.3, 655.3, '#950000');
xy += rect(572, 573, 655, 731, '#555') + text(552, 658.3, '100', 15.5, '#444', { font: SANS, size: 9 }) + text(559.5, 735, '0', 0, '#444', { font: SANS, size: 9 });
xy += rect(3, 1131, 680.2, 681, '#d5d51f') + rect(714.3, 715, 655, 731, '#999');
for (const x of [67.5, 357, 646.5, 934.5]) xy += text(x, 680.6, 'mean', 23.5, '#d8d82a', { size: 9, weight: 600 });
$('t-xy').innerHTML = xy;

/* Contigs */
const ORANGE = '#ffcc00';
let ab = grid(731, 788);
for (const [a, b] of [[28, 38], [65, 75], [94, 98]]) ab += rect(a, b, 747.3, 753.8, ORANGE);
ab += rect(243, 458, 750, 751, '#999') + rect(665, 748, 750, 751, '#999');
for (const [a, b] of [[243, 277.3], [291, 327.3], [344, 367], [378.3, 415.7], [451, 458.6], [665.3, 713.8], [721, 748]]) ab += rect(a, b, 747.5, 754, ORANGE);
ab += gene(750.5, [['left', 235.5], ['left', 657.5]], N) + wt(243, 763.2, 'gi|308402516|gb|HP470650.1|', 129) + wt(665, 763.2, 'gi|308399807|gb|HP468062.1|', 129) + wt(3, 763.2, '2038|gb|HP460676.1|', 94);
$('t-abdomen').innerHTML = ab;

/* Heatmap */
let hm = `<defs><linearGradient id="in"><stop offset="0" stop-color="#c3c3e4"/><stop offset=".7" stop-color="#a7a7e8"/><stop offset="1" stop-color="#1010ff"/></linearGradient>
<linearGradient id="out"><stop offset="0" stop-color="#00f"/><stop offset="1" stop-color="#d0d0e8"/></linearGradient>
<linearGradient id="dip"><stop offset="0" stop-color="#4040ff"/><stop offset=".12" stop-color="#8f8ff0"/><stop offset=".5" stop-color="#d4d4e8"/><stop offset=".75" stop-color="#a8a8ee"/><stop offset="1" stop-color="#00f"/></linearGradient></defs>`;
hm += rect(3, 1140, 788.3, 812, '#e1e1e1');
for (const [a, b, c] of [[388, 393, '#dcdce4'], [393, 401, '#d3d3e5'], [401, 416, '#dbdbe4'], [419, 431, '#d8d8e5'], [451, 462, '#d6d6e5'], [462, 474, '#dcdce4'], [525, 545, '#dbdbe4'], [748, 758, '#dddde3'], [845, 860, '#dbdbe5'], [925, 950, '#dddee4'], [953, 965, '#cfcfea'], [970, 982, '#cfcfea'], [982, 999, '#dcdce5'], [1078, 1087, '#dddee4']]) hm += rect(a, b, 788.3, 812, c);
hm += rect(243, 254, 788.3, 812, 'url(#in)') + rect(380, 387, 788.3, 812, 'url(#out)') + rect(518, 522, 788.3, 812, 'url(#in)') + rect(661, 698, 788.3, 812, 'url(#dip)') + rect(732, 748, 788.3, 812, 'url(#out)');
for (const [a, b] of [[253.5, 277.4], [291, 327.4], [344, 367.2], [378.3, 381], [521.5, 524.8], [591.3, 661.5], [697.5, 714.3], [721.5, 733]])
  hm += rect(a, b, 788.3, 812, '#0000ff') + rect(a + .5, b - .3, 788.3, 790.4, '#000010');
$('t-heat').innerHTML = hm;

/* Augustus */
const A = { line: 2, utr: 4, utrFill: '#6d2e66', cds: 4.7, stroke: '#a3a3a3' };
$('t-augustus').innerHTML = grid(812, 841) + rect(8, 17, 829.5, 838.5, PINK) + rect(27, 36, 829.5, 838.5, PURPLE) + rect(66, 74, 829.5, 838.5, PURPLE) + rect(75, 96, 830, 838, '#6d2e66') +
  gene(834.2, [['left', 236], ['line', 243, 452], ['utr', 244, 252], ['utr', 413, 416], ['utr', 451, 463], ...exons], A) +
  gene(834.2, [['line', 515, 591], ['utr', 515, 524], ['utr', 591, 680], ['p', 593.3, 648.6], ['right', 680]], A) +
  gene(834.2, [['left', 925.5], ['line', 999, 1140], ['utr', 933, 944], ['g', 944.3, 999.3]], A);

/* Track list */
const names = ['Official Gene Set v3.2', 'Augustus Set 12', 'Augustus Set 9', 'Fgenesh', 'Fgenesh++ without RNASeq training data',
  'Fgenesh++ with RNASeq training data', 'GeneID', 'NCBI Gnomon', 'N-SCAN', 'SGP2', 'Official Gene Set v1.0', 'Abdomen 454 Contigs',
  'Brain and Ovary 454 contigs', 'Embyro 454 contigs', 'Forager Bee Brain Illumina Contigs', 'Larvae 454 contigs',
  'Mixed Antennae 454 Contigs', 'NCBI ESTs', 'Nurse Bee Brain Illumina Contigs'];
$('rows').innerHTML = names.map((n, i) =>
  `<div class="row"><span class="box">${i < 2 ? '<svg width="7" height="7"><path d="M1.300 3.500L3 5.500L6 1" fill="none" stroke="#222" stroke-width="1.400"/></svg>' : ''}</span><span>${n}</span></div>`).join('');
```
